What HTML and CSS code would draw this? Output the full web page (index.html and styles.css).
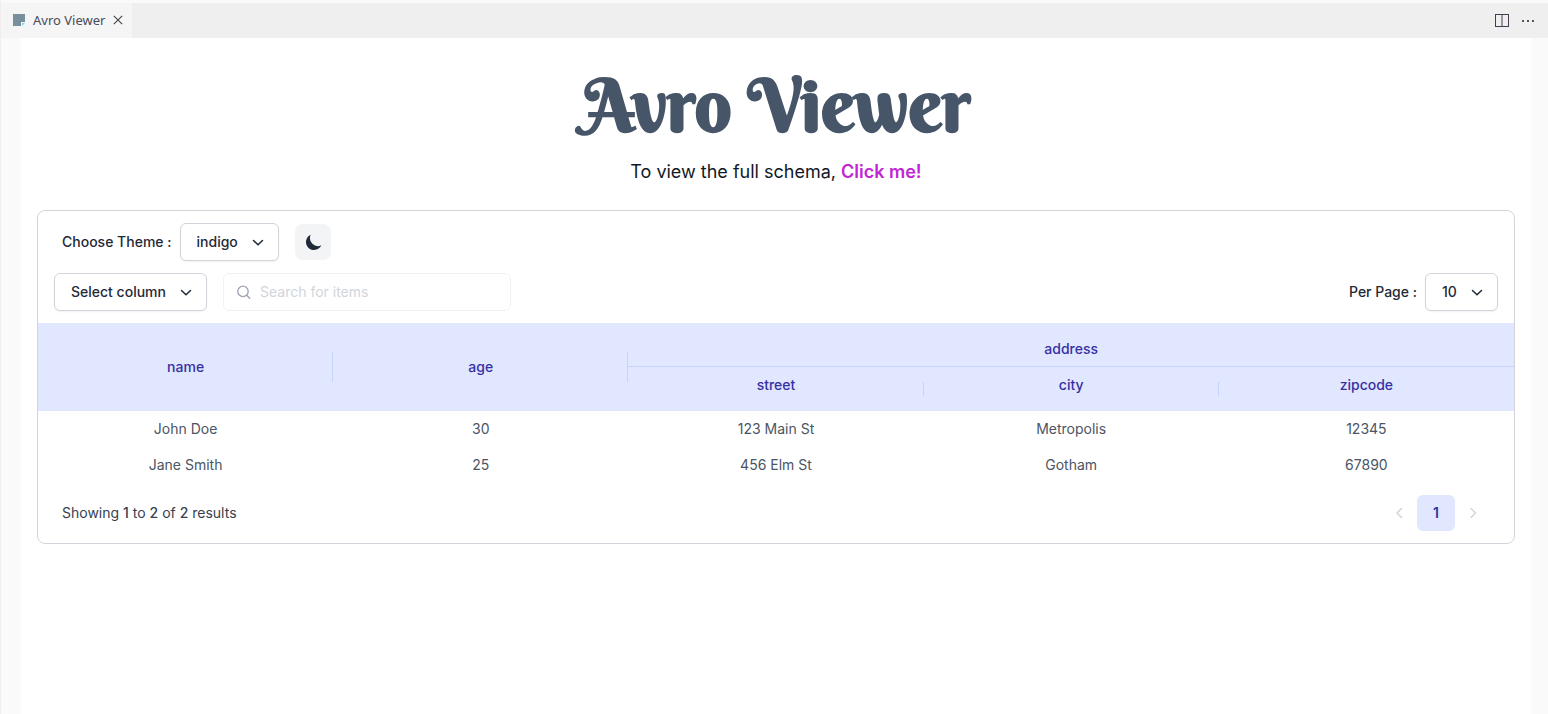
FILE: index.html
```html
<!DOCTYPE html>
<html lang="en">
<head>
<meta charset="utf-8">
<title>Avro Viewer</title>
<link rel="stylesheet" href="styles.css">
</head>
<body>
<header class="tabbar">
  <div class="tab">
    <svg class="file-icon" viewBox="0 0 12 12"><path fill="#78909c" d="M0 0h12v8H8v4H0z"/><path fill="#81d4fa" d="M9 9h3l-3 3z"/></svg>
    <span>Avro Viewer</span>
    <button class="icon-btn close" aria-label="Close tab"><svg width="10" height="10" viewBox="0 0 10 10"><path d="M.8 .8l8.400 8.400M9.200 .8l-8.400 8.400" fill="none" stroke="#424242" stroke-width="1.100"/></svg></button>
  </div>
  <div class="tab-actions">
    <button class="icon-btn" aria-label="Split editor"><svg width="14" height="14" viewBox="0 0 14 14"><path d="M0 .5h14M0 12.500h14M.5 0v13M13.500 0v13M7 0v13" fill="none" stroke="#4a3a50"/></svg></button>
    <button class="icon-btn" aria-label="More actions"><svg width="14" height="14" viewBox="0 0 14 14"><path d="M1 6h2v2H1zM6 6h2v2H6zM11 6h2v2h-2z" fill="#555"/></svg></button>
  </div>
</header>
<div class="frame">
  <main class="page">
    <h1 class="title">Avro Viewer</h1>
    <p class="subtitle">To view the full schema, <a href="#schema">Click me!</a></p>
    <section class="card">
      <div class="toolbar">
        <div class="row row-theme">
          <label for="theme">Choose Theme :</label>
          <div class="picker picker-theme">
            <select id="theme"><option>indigo</option></select>
            <svg class="chevron" viewBox="0 0 20 20"><path d="M5.500 8.500l4.500 4.300L14.500 8.500"/></svg>
          </div>
          <button class="dark-toggle" aria-label="Dark mode"><svg width="20" height="20" viewBox="0 0 20 20"><path fill="#1f2937" d="M18.293 13.293A8 8 0 017.707 2.707a8.001 8.001 0 1010.586 10.586z"/></svg></button>
        </div>
        <div class="row">
          <div class="picker picker-column">
            <select aria-label="Column"><option>Select column</option></select>
            <svg class="chevron" viewBox="0 0 20 20"><path d="M5.500 8.500l4.500 4.300L14.500 8.500"/></svg>
          </div>
          <div class="search">
            <svg width="16" height="16" viewBox="0 0 16 16"><path d="M11 11.500L13.700 14.200M12.200 7.400A5.200 5.200 0 1 1 1.800 7.400a5.200 5.200 0 0 1 10.400 0z" fill="none" stroke="#9ca3af" stroke-width="1.300" stroke-linecap="round"/></svg>
            <input type="text" placeholder="Search for items" aria-label="Search for items">
          </div>
          <div class="per-page">
            <label for="per">Per Page :</label>
            <div class="picker picker-count">
              <select id="per"><option>10</option></select>
              <svg class="chevron" viewBox="0 0 20 20"><path d="M5.500 8.500l4.500 4.300L14.500 8.500"/></svg>
            </div>
          </div>
        </div>
      </div>
      <table class="data">
        <thead>
          <tr><th rowspan="2" class="divided">name</th><th rowspan="2" class="divided">age</th><th colspan="3" class="group">address</th></tr>
          <tr class="sub"><th class="divided">street</th><th class="divided">city</th><th>zipcode</th></tr>
        </thead>
        <tbody>
          <tr><td>John Doe</td><td>30</td><td>123 Main St</td><td>Metropolis</td><td>12345</td></tr>
          <tr><td>Jane Smith</td><td>25</td><td>456 Elm St</td><td>Gotham</td><td>67890</td></tr>
        </tbody>
      </table>
      <footer class="footer">
        <p>Showing <b>1</b> to <b>2</b> of <b>2</b> results</p>
        <nav class="pager" aria-label="Pages">
          <button aria-label="Previous"><svg width="8" height="12" viewBox="0 0 8 12"><path d="M6.500 1.500L2 6L6.500 10.500"/></svg></button>
          <button class="current">1</button>
          <button aria-label="Next"><svg width="8" height="12" viewBox="0 0 8 12"><path d="M2 1.500L6.500 6L2 10.500"/></svg></button>
        </nav>
      </footer>
    </section>
  </main>
</div>
</body>
</html>
```
FILE: styles.css
```css
* { box-sizing: border-box; }
body {
  margin: 0;
  min-height: 100vh;
  display: flex;
  flex-direction: column;
  padding-top: 3px;
  border-left: 1px solid #efefef;
  background: #fafafa;
  color: #1f2937;
  font: 14px/20px Inter, "Liberation Sans", sans-serif;
}
button, select, input { font: inherit; color: inherit; }
button { border: 0; padding: 0; background: none; display: grid; place-items: center; }
svg { display: block; }
p, h1 { margin: 0; }

.tabbar { display: flex; justify-content: space-between; height: 35px; background: #efefef; }
.tab {
  display: flex;
  align-items: center;
  gap: 8px;
  width: 131px;
  padding: 0 0 1px 12px;
  background: #f5f5f5;
  color: #4a4a5a;
  font: 13px/18px "Noto Sans", sans-serif;
}
.file-icon { width: 12px; height: 12px; }
.icon-btn { width: 14px; height: 14px; }
.close { width: 10px; }
.tab-actions { display: flex; align-items: center; gap: 12px; padding-right: 13px; }

.frame { flex: 1; display: flex; padding: 0 17px 0 20px; }
.page { flex: 1; background: #fff; padding: 24px 16px; text-align: center; }
.title { color: #475569; font: bold 72px/86px "Berkshire Swash", "DejaVu Serif", serif; }
.subtitle { margin-top: 10px; color: #111827; font-size: 18px; line-height: 28px; }
.subtitle a { color: #c026d3; font-weight: 600; text-decoration: none; }

.card { margin-top: 24px; border: 1px solid #d1d5db; border-radius: 8px; text-align: left; }
.toolbar { display: grid; gap: 12px; padding: 12px 16px; font-weight: 500; }
.row { display: flex; align-items: center; gap: 16px; }
.row-theme { padding-left: 8px; }
.row-theme label { margin-right: -8px; }
.picker { display: grid; align-items: center; }
.picker > * { grid-area: 1 / 1; }
.picker select {
  appearance: none;
  width: 100%;
  height: 38px;
  padding: 0 16px;
  border: 1px solid #d1d5db;
  border-radius: 6px;
  background: #fff;
  box-shadow: 0 1px 2px rgba(0, 0, 0, .05);
}
.picker-theme { width: 99px; }
.picker-column { width: 153px; }
.picker-count { width: 73px; }
.chevron {
  justify-self: end;
  width: 20px;
  height: 20px;
  margin-right: 11px;
  pointer-events: none;
  fill: none;
  stroke: #1f2937;
  stroke-width: 1.500;
  stroke-linecap: round;
}
.dark-toggle { width: 36px; height: 36px; border-radius: 8px; background: #f3f4f6; }
.search {
  display: flex;
  align-items: center;
  gap: 8px;
  width: 288px;
  height: 38px;
  padding: 0 12px;
  border: 1px solid #f1f2f4;
  border-radius: 6px;
}
.search input { flex: 1; min-width: 0; border: 0; padding: 0; outline: 0; background: none; font-weight: 400; }
.search input::placeholder { color: #d1d5db; opacity: 1; }
.per-page { display: flex; align-items: center; gap: 8px; margin-left: auto; }

.data { width: 100%; table-layout: fixed; border-collapse: separate; border-spacing: 0; text-align: center; }
.data thead { background: #e0e7ff; color: #3730a3; }
.data th { position: relative; height: 44px; padding: 0; font-weight: 500; }
.data .group { border-bottom: 1px solid #c7d2fe; padding-top: 8px; }
.data .sub th { padding-bottom: 8px; }
.divided::after {
  content: "";
  position: absolute;
  right: 0;
  top: 33%;
  height: 34%;
  border-right: 1px solid #c7d2fe;
}
.data td { height: 36px; padding: 0; color: #4b5563; }

.footer { display: flex; align-items: center; justify-content: space-between; padding: 12px 23px 12px 24px; color: #374151; }
.footer b { font-weight: 500; }
.pager { display: flex; }
.pager button { width: 36px; height: 36px; }
.pager .current { width: 38px; border-radius: 6px; background: #e0e7ff; color: #3730a3; font-weight: 600; }
.pager path { fill: none; stroke: #d1d5db; stroke-width: 1.500; stroke-linecap: round; stroke-linejoin: round; }
```
